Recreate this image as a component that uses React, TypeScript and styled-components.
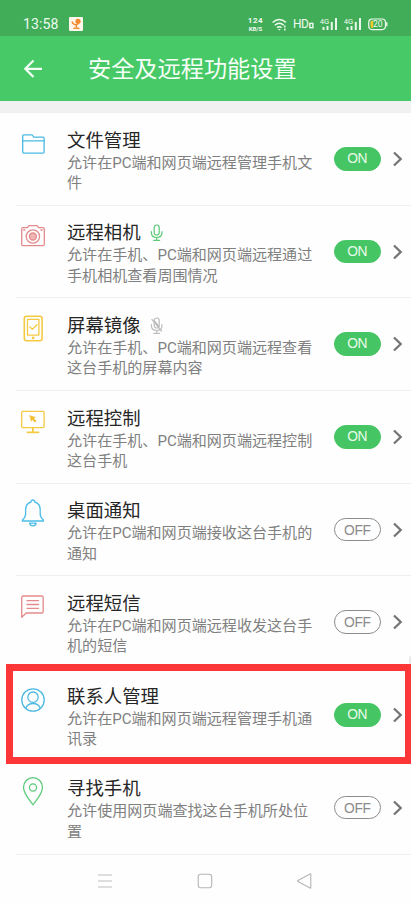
import React from 'react';
import styled, { createGlobalStyle } from 'styled-components';

const GlobalStyle = createGlobalStyle`
  * { box-sizing: border-box; }
  body { margin: 0; background: #fefefe; overflow: hidden; }
  svg { display: block; flex: none; }
`;

const Screen = styled.div`
  position: relative;
  width: 411px;
  height: 903px;
  display: flex;
  flex-direction: column;
  background: #fefefe;
  overflow: hidden;
  font-family: Roboto, 'Noto Sans CJK SC', sans-serif;
`;

const StatusBar = styled.div`
  height: 36px;
  flex: none;
  display: flex;
  align-items: center;
  padding: 12px 0 0 23px;
  background: #42ad59;
  color: #effbf1;
`;

const Clock = styled.span`
  width: 46px;
  font-size: 14px;
  line-height: 16px;
  letter-spacing: 0.1px;
`;

const NetSpeed = styled.div`
  margin-left: 164px;
  width: 17px;
  display: flex;
  flex-direction: column;
  align-items: center;
  font-weight: 700;
  white-space: nowrap;
`;

const SpeedValue = styled.span`
  font-size: 8px;
  line-height: 9px;
  letter-spacing: 0.6px;
`;

const SpeedUnit = styled.span`
  font-size: 6px;
  line-height: 7px;
`;

const Hd = styled.span`
  display: flex;
  align-items: center;
  margin-left: 5px;
  width: 27px;
  font-size: 12px;
  line-height: 14px;
  letter-spacing: -0.6px;
`;

const HdMark = styled.svg`
  margin: 2px 0 0 0.6px;
`;

const Header = styled.header`
  height: 65px;
  flex: none;
  display: flex;
  align-items: center;
  padding: 1px 0 0 23px;
  background: #46c966;
  color: #f6fff7;
`;

const HeaderTitle = styled.h1`
  margin: 0 0 0 45px;
  font-size: 23.2px;
  line-height: 32px;
  font-weight: 400;
  white-space: nowrap;
`;

const Strip = styled.div`
  height: 12px;
  flex: none;
  background: #f2f1f2;
`;

const List = styled.main`
  flex: none;
  height: 741.6px;
  display: grid;
  grid-template-rows: repeat(8, 1fr);
  padding-left: 16px;
`;

const Row = styled.section`
  display: flex;
  border-bottom: 1.5px solid #efefef;
`;

const IconCell = styled.div<{ $top: number }>`
  width: 34px;
  margin-right: 17px;
  padding-top: ${(p) => p.$top}px;
  display: flex;
  justify-content: center;
  align-items: flex-start;
`;

const Copy = styled.div`
  width: 267px;
  padding-top: 14.6px;
`;

const Title = styled.h2`
  display: flex;
  align-items: center;
  gap: 9px;
  margin: 0;
  height: 25px;
  font-size: 18.4px;
  font-weight: 400;
  line-height: 25px;
  color: #262626;
  white-space: nowrap;
`;

const Desc = styled.p`
  margin: 0;
  font-size: 15.07px;
  line-height: 20.4px;
  color: #808080;
  white-space: pre;
`;

const Toggle = styled.span<{ $on: boolean }>`
  width: 46.5px;
  height: 23.5px;
  margin-top: 34px;
  flex: none;
  border-radius: 12px;
  border: 1.2px solid ${(p) => (p.$on ? '#46c564' : '#8c8c8c')};
  background: ${(p) => (p.$on ? '#46c564' : '#fefefe')};
  color: ${(p) => (p.$on ? '#e6fbea' : '#8a8a8a')};
  font-family: 'Liberation Sans', Arial, sans-serif;
  font-size: 13.8px;
  line-height: ${(p) => (p.$on ? '22px' : '24px')};
  letter-spacing: ${(p) => (p.$on ? '-0.3px' : '-0.4px')};
  text-align: center;
`;

const Chevron = styled.svg`
  margin: 38px 0 0 11.5px;
`;

const Highlight = styled.div`
  position: absolute;
  left: 6px;
  top: 664px;
  width: 405px;
  height: 100px;
  border: 7px solid #fd3737;
  border-right-width: 6px;
`;

const EdgeHandle = styled.div`
  position: absolute;
  right: 0;
  top: 656px;
  width: 2px;
  height: 8px;
  border-top-left-radius: 2px;
  background: #e9e9e9;
`;

const NavBar = styled.nav`
  flex: 1;
  display: flex;
  align-items: center;
  padding: 4px 0 0 97px;
  gap: 84px;
`;

type Kind = 'folder' | 'camera' | 'tablet' | 'monitor' | 'bell' | 'message' | 'person' | 'pin';

const iconColor: Record<Kind, string> = {
  folder: '#4ab9e2',
  camera: '#e58a8c',
  tablet: '#f5ca43',
  monitor: '#f5ca43',
  bell: '#4cbde8',
  message: '#e58a8c',
  person: '#4cb9e0',
  pin: '#5dca7c',
};

const iconTop: Record<Kind, number> = {
  folder: 17,
  camera: 15,
  tablet: 15,
  monitor: 15,
  bell: 14.5,
  message: 15,
  person: 15.5,
  pin: 13,
};

const shapes: Record<Kind, React.ReactNode> = {
  folder: (
    <>
      <path d="M4.700 22.100V5.800q0-1 1-1h7.700q1 0 1.500 1l.8 1.400h9.400q1 0 1 1v13.900q0 1-1 1H5.700q-1 0-1-1Z" />
      <path d="M4.700 10.800h21.400" />
    </>
  ),
  camera: (
    <>
      <path d="M5.200 6.700h4.200l1.500-2h8.200l1.500 2h4.200q1.500 0 1.500 1.500v15q0 1.500-1.500 1.500H5.200q-1.500 0-1.500-1.500v-15Q3.700 6.700 5.200 6.700Z" />
      <circle cx="14.900" cy="15.500" r="6.700" />
      <circle cx="14.900" cy="15.500" r="3.500" fill="#efb5b5" />
      <path d="M5.700 9h1.200M22.900 9h1.200" />
    </>
  ),
  tablet: (
    <>
      <rect x="6.300" y="3.200" width="17.800" height="24.500" rx="2.400" strokeWidth="1.600" />
      <rect x="9.500" y="6.300" width="11.400" height="15.800" />
      <path d="m12 14 2.400 2.400 4.500-4.600" />
      <circle cx="15.200" cy="24.900" r=".7" fill="#f5ca43" />
    </>
  ),
  monitor: (
    <>
      <rect x="3.700" y="5.300" width="22.400" height="16.300" rx="1" />
      <path d="M14.900 21.800v4M9.500 26.300h11" strokeWidth="1.800" />
      <path d="m12 9.700 5.300 1.700-1.700 1 2.500 2.700-1.200 1.100-2.500-2.700-1 1.600Z" fill="#f2bd2e" stroke="#f2bd2e" strokeWidth=".6" />
    </>
  ),
  bell: (
    <>
      <path d="M4.400 23v-1q3.200-2.500 3.200-6v-4q0-6.500 5.400-8 .1-2 1.900-2t1.900 2q5.400 1.500 5.400 8v4q0 3.500 3.200 6v1Z" />
      <path d="M11.600 25.200h6.500q-.4 2.700-3.200 2.700t-3.300-2.700Z" />
    </>
  ),
  message: (
    <>
      <path d="M3.700 26.300V6.600Q3.700 5 5.300 5h18.300Q25.200 5 25.200 6.600v13.800q0 1.600-1.600 1.600H8.200Z" />
      <path d="M9 9.700h11.500M9 13.500h11.500M9 17.300h11.500" />
    </>
  ),
  person: (
    <>
      <circle cx="15" cy="15" r="11.200" />
      <circle cx="15" cy="12.200" r="5.200" />
      <path d="M7.800 23q2-4.500 7.200-4.500t7.200 4.500" />
    </>
  ),
  pin: (
    <>
      <path d="M15 29.800C12.800 26.500 5.500 19.300 5.500 12.300a9.500 9.700 0 0 1 19 0c0 7-7.300 14.200-9.500 17.500Z" />
      <circle cx="15" cy="12.500" r="3.600" />
    </>
  ),
};

const RowIcon = ({ kind }: { kind: Kind }) => (
  <svg width="30" height="32" viewBox="0 0 30 32" fill="none" stroke={iconColor[kind]} strokeWidth="1.3" strokeLinejoin="round" strokeLinecap="round">
    {shapes[kind]}
  </svg>
);

const Mic = ({ muted }: { muted: boolean }) => (
  <svg width="14" height="19" viewBox="0 0 14 19" fill="none" stroke={muted ? '#bdbdbd' : '#5bc976'} strokeWidth="1.2" strokeLinecap="round">
    <rect x="4.200" y="2" width="5" height="10" rx="2.500" />
    <path d="M1.400 8.500v1q0 5 5.300 5t5.300-5v-1M6.700 14.700V17M3.700 17.300h6" />
    {muted && <path d="M2 3.500 11.500 15M4.500 5l4.500 5.500" />}
  </svg>
);

interface Item {
  kind: Kind;
  title: string;
  desc: string;
  on: boolean;
  mic?: 'live' | 'muted';
}

const items: Item[] = [
  { kind: 'folder', title: '文件管理', desc: '允许在PC端和网页端远程管理手机文\n件', on: true },
  { kind: 'camera', title: '远程相机', desc: '允许在手机、PC端和网页端远程通过\n手机相机查看周围情况', on: true, mic: 'live' },
  { kind: 'tablet', title: '屏幕镜像', desc: '允许在手机、PC端和网页端远程查看\n这台手机的屏幕内容', on: true, mic: 'muted' },
  { kind: 'monitor', title: '远程控制', desc: '允许在手机、PC端和网页端远程控制\n这台手机', on: true },
  { kind: 'bell', title: '桌面通知', desc: '允许在PC端和网页端接收这台手机的\n通知', on: false },
  { kind: 'message', title: '远程短信', desc: '允许在PC端和网页端远程收发这台手\n机的短信', on: false },
  { kind: 'person', title: '联系人管理', desc: '允许在PC端和网页端远程管理手机通\n讯录', on: true },
  { kind: 'pin', title: '寻找手机', desc: '允许使用网页端查找这台手机所处位\n置', on: false },
];

const SignalSvg = styled.svg`
  margin-right: 6px;
`;

const Signal = () => (
  <SignalSvg width="18" height="14" viewBox="0 0 18 14">
    <text x="-.3" y="6.500" fontSize="7.600" fontFamily="Roboto, sans-serif" fill="#effbf1">4G</text>
    <path d="M3.500 10v3M7.500 9v4M11.800 5v8M16 1v12" stroke="#e8f8eb" strokeWidth="2" />
  </SignalSvg>
);

const WifiSvg = styled.svg`
  margin-left: 8px;
`;

export default function App() {
  return (
    <>
      <GlobalStyle />
      <Screen>
        <StatusBar>
          <Clock>13:58</Clock>
          <svg width="14" height="14" viewBox="0 0 14 14">
            <rect width="14" height="14" rx="1" fill="#fff7ec" />
            <circle cx="9" cy="4.300" r="2.600" fill="#f08a2c" />
            <path d="M3 4.500q1 3.300 4.400 3.300l1.800-1.200M7.400 7.500v3.300M4.400 11.600q3-1.200 6 0" fill="none" stroke="#f08a2c" strokeWidth="1.400" />
          </svg>
          <NetSpeed>
            <SpeedValue>124</SpeedValue>
            <SpeedUnit>KB/S</SpeedUnit>
          </NetSpeed>
          <WifiSvg width="16" height="13" viewBox="0 0 16 13" fill="none" stroke="#effbf1" strokeWidth="1.5">
            <path d="M.6 4.500Q7.300-1.500 14 4.500M2.800 7.300q4.500-4 9 0M5 9.800q2.300-2 4.600 0" />
            <path d="m7.300 12.500-1.500-1.600h3Z" fill="#effbf1" stroke="none" />
            <path d="M12.800 7.500v2M12.800 10.500v2" />
          </WifiSvg>
          <Hd>
            HD
            <HdMark width="5" height="7" viewBox="0 0 5 7">
              <rect x=".9" y="1.400" width="3" height="4.300" fill="none" stroke="#effbf1" strokeWidth="1.400" />
            </HdMark>
          </Hd>
          <Signal />
          <Signal />
          <svg width="20" height="13" viewBox="0 0 20 13">
            <rect x=".7" y="1" width="16.800" height="10.600" rx="3.500" fill="none" stroke="#effbf1" strokeWidth="1.200" />
            <path d="M18.800 4.300v4" stroke="#effbf1" strokeWidth="1.300" />
            <path d="M5.200 2.600H4.500q-2 0-2 2V8q0 2 2 2h.7Z" fill="#f5c928" />
            <text x="5" y="9.300" fontSize="8.500" fontFamily="Roboto, sans-serif" fill="#effbf1">20</text>
          </svg>
        </StatusBar>
        <Header>
          <svg width="20" height="20" viewBox="0 0 20 20" fill="none" stroke="#f6fff7" strokeWidth="2.2">
            <path d="M10.500 1.500 2.300 9.800l8.200 8.300M2 9.800h17" />
          </svg>
          <HeaderTitle>安全及远程功能设置</HeaderTitle>
        </Header>
        <Strip />
        <List>
          {items.map((it) => (
            <Row key={it.kind}>
              <IconCell $top={iconTop[it.kind]}>
                <RowIcon kind={it.kind} />
              </IconCell>
              <Copy>
                <Title>
                  {it.title}
                  {it.mic && <Mic muted={it.mic === 'muted'} />}
                </Title>
                <Desc>{it.desc}</Desc>
              </Copy>
              <Toggle $on={it.on}>{it.on ? 'ON' : 'OFF'}</Toggle>
              <Chevron width="12" height="16" viewBox="0 0 12 16" fill="none" stroke="#757575" strokeWidth="2.3">
                <path d="m2 1.500 6.700 6.500L2 14.500" />
              </Chevron>
            </Row>
          ))}
        </List>
        <NavBar>
          <svg width="16" height="16" viewBox="0 0 16 16" stroke="#bdbdbd" strokeWidth="1.1">
            <path d="M1 2h14M1 8h14M1 14h14" />
          </svg>
          <svg width="16" height="16" viewBox="0 0 16 16" fill="none" stroke="#b5b5b5" strokeWidth="1.1">
            <rect x="1.200" y="1.200" width="13.500" height="13.500" rx="2.400" />
          </svg>
          <svg width="16" height="16" viewBox="0 0 16 16" fill="none" stroke="#b5b5b5" strokeWidth="1.1" strokeLinejoin="round">
            <path d="M13.800 1.200v13.600q0 .6-.7.3L.9 8.600Q.3 8 .9 7.500L13.100.9q.7-.3.7.3Z" />
          </svg>
        </NavBar>
        <EdgeHandle />
        <Highlight />
      </Screen>
    </>
  );
}
